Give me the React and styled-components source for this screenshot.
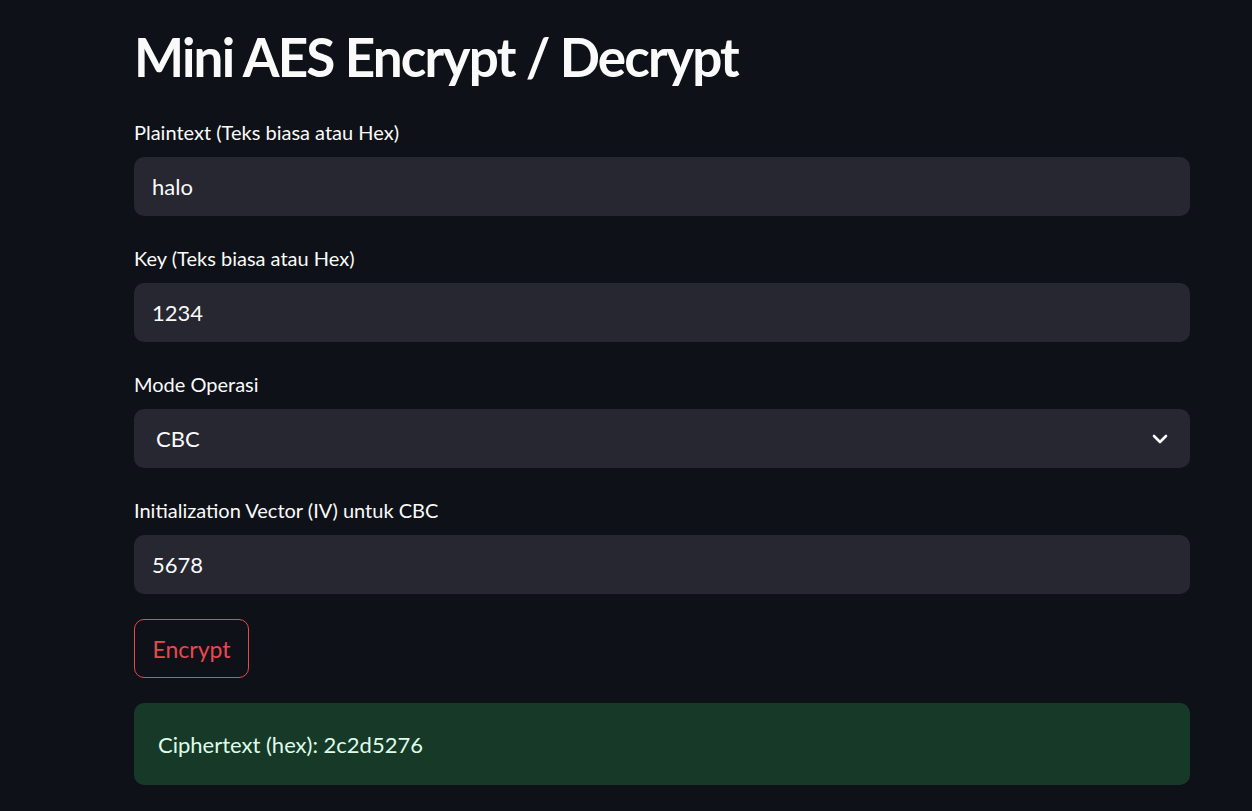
import React from 'react'
import styled, { createGlobalStyle } from 'styled-components'

const GlobalStyle = createGlobalStyle`
  html, body {
    margin: 0;
    padding: 0;
    background: #0e1117;
  }
  body {
    font-family: Lato, "Open Sans", sans-serif;
    color: #fafafa;
  }
`

const Page = styled.main`
  min-height: 811px;
  box-sizing: border-box;
  padding: 21px 62px 0 134px;
  background: #0e1117;
`

const Title = styled.h1`
  margin: 0 0 27px;
  font-size: 53px;
  line-height: 72px;
  font-weight: 700;
  color: #fafafa;
  letter-spacing: -1.8px;
`

const Fields = styled.div`
  display: flex;
  flex-direction: column;
  gap: 30px;
`

const Field = styled.div`
  display: flex;
  flex-direction: column;
  gap: 13px;
`

const Label = styled.label`
  font-size: 20px;
  line-height: 24px;
  color: #fafafa;
`

const Input = styled.div`
  display: flex;
  align-items: center;
  justify-content: space-between;
  height: 59px;
  box-sizing: border-box;
  padding: 0 22px 0 ${p => (p.$select ? '22px' : '18px')};
  background: #262730;
  border-radius: 10px;
  font-size: 22px;
  color: #fafafa;
`

const Actions = styled.div`
  display: flex;
  flex-direction: column;
  align-items: flex-start;
  gap: 25px;
  margin-top: 25px;
`

const Button = styled.button`
  height: 59px;
  width: 115px;
  box-sizing: border-box;
  background: transparent;
  border: 1px solid #e8484e;
  border-radius: 10px;
  color: #e8484e;
  font-family: inherit;
  font-size: 23px;
  padding: 0;
`

const Result = styled.div`
  align-self: stretch;
  height: 82px;
  box-sizing: border-box;
  display: flex;
  align-items: center;
  padding: 0 24px;
  background: #173928;
  border-radius: 10px;
  color: #dffde9;
  font-size: 22px;
`

const Chevron = () => (
  <svg width="16" height="10" viewBox="0 0 16 10">
    <polyline points="2,2 8,8 14,2" fill="none" stroke="#fafafa" strokeWidth="2.6" strokeLinecap="round" strokeLinejoin="round" />
  </svg>
)

export default function App() {
  return (
    <Page>
      <GlobalStyle />
      <Title>Mini AES Encrypt / Decrypt</Title>
      <Fields>
        <Field>
          <Label>Plaintext (Teks biasa atau Hex)</Label>
          <Input>halo</Input>
        </Field>
        <Field>
          <Label>Key (Teks biasa atau Hex)</Label>
          <Input>1234</Input>
        </Field>
        <Field>
          <Label>Mode Operasi</Label>
          <Input $select>
            CBC
            <Chevron />
          </Input>
        </Field>
        <Field>
          <Label>Initialization Vector (IV) untuk CBC</Label>
          <Input>5678</Input>
        </Field>
      </Fields>
      <Actions>
        <Button>Encrypt</Button>
        <Result>Ciphertext (hex): 2c2d5276</Result>
      </Actions>
    </Page>
  )
}
